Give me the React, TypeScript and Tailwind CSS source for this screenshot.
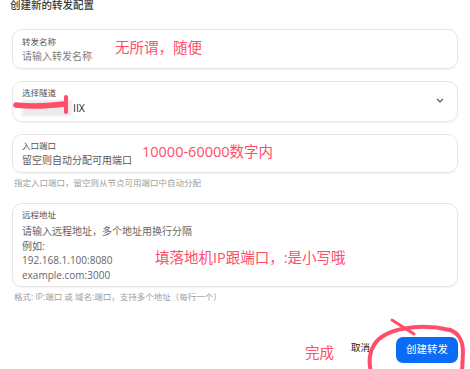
export default function App() {
  return (
    <div
      className="relative h-[369px] w-[470px] overflow-hidden bg-white px-3"
      style={{ fontFamily: '"Open Sans", "Noto Sans CJK SC", sans-serif' }}
    >
      {/* Header */}
      <h2 className="mt-[-2px] mb-[17px] ml-[-2px] text-[10.5px] leading-[14px] font-medium text-[#3a3a3a]">创建新的转发配置</h2>

      {/* 转发名称 */}
      <div className="rounded-[10px] border border-[#e6e6e6] px-[9px] pt-[6px] pb-[5px] shadow-[0_1px_2px_rgba(0,0,0,0.05)]">
        <div className="text-[8.5px] leading-[12px] text-[#555]">转发名称</div>
        <div className="mt-[1px] text-[10px] leading-[14px] text-[#808080]">请输入转发名称</div>
      </div>

      {/* 选择隧道 */}
      <div className="mt-[12px] flex items-center rounded-[10px] border border-[#e6e6e6] px-[9px] pt-[5px] pb-[5px] shadow-[0_1px_2px_rgba(0,0,0,0.05)]">
        <div className="flex-1">
          <div className="text-[8.5px] leading-[12px] text-[#555]">选择隧道</div>
          <div className="mt-[1px] flex items-center text-[10.5px] leading-[14px] text-[#222]">
            <span className="mr-[1px] inline-block h-[16px] w-[50px] bg-[#ebebeb] blur-[1px]" />
            IIX
          </div>
        </div>
        <svg width="8" height="5" viewBox="0 0 8 5" className="mr-[4px] mt-[-2px]">
          <path d="M1 1l3 3 3-3" fill="none" stroke="#555" strokeWidth="1.2" />
        </svg>
      </div>

      {/* 入口端口 */}
      <div className="mt-[12px] rounded-[10px] border border-[#e6e6e6] px-[9px] pt-[5px] pb-[5px] shadow-[0_1px_2px_rgba(0,0,0,0.05)]">
        <div className="text-[8.5px] leading-[12px] text-[#555]">入口端口</div>
        <div className="mt-[1px] text-[10px] leading-[14px] text-[#5a5a5a]">留空则自动分配可用端口</div>
      </div>
      <p className="mt-[4px] pl-[2px] text-[8.5px] leading-[12px] text-[#a0a0a0]">
        指定入口端口，留空则从节点可用端口中自动分配
      </p>

      {/* 远程地址 */}
      <div className="mt-[14px] rounded-[10px] border border-[#e6e6e6] px-[9px] pt-[5px] pb-[4px] shadow-[0_1px_2px_rgba(0,0,0,0.05)]">
        <div className="text-[8.5px] leading-[12px] text-[#555]">远程地址</div>
        <div className="mt-[3px] text-[10px] leading-[14.5px] text-[#666]">
          <div>请输入远程地址，多个地址用换行分隔</div>
          <div>例如:</div>
          <div>192.168.1.100:8080</div>
          <div>example.com:3000</div>
        </div>
      </div>
      <p className="mt-[4px] pl-[2px] text-[8.5px] leading-[12px] text-[#a0a0a0]">
        格式: IP:端口 或 域名:端口，支持多个地址（每行一个）
      </p>

      {/* Footer buttons */}
      <div className="mt-[34px] flex items-center justify-end">
        <button className="mr-[26px] mt-[-4px] text-[9.5px] leading-[14px] text-[#222]">取消</button>
        <button className="h-[26px] w-[62px] rounded-[7px] bg-[#0a6cf5] text-[10.5px] text-white">创建转发</button>
      </div>

      {/* Annotations */}
      <span className="absolute top-[38px] left-[115px] text-[14.5px] leading-[20px] text-[#ff4d6a]">无所谓，随便</span>
      <span className="absolute top-[142px] left-[142px] text-[14.5px] leading-[20px] text-[#ff4d6a]">10000-60000数字内</span>
      <span className="absolute top-[248px] left-[155px] text-[14.5px] leading-[20px] text-[#ff4d6a]">填落地机IP跟端口，:是小写哦</span>
      <span className="absolute top-[343px] left-[305px] text-[14.5px] leading-[20px] text-[#ff4d6a]">完成</span>

      <svg className="pointer-events-none absolute inset-0" width="470" height="369" viewBox="0 0 470 369">
        <g fill="none" stroke="#ff4d6a" strokeLinecap="round">
          <path d="M16 105 C32 107 48 106 64 104" strokeWidth="5.5" />
          <path d="M66 97 L66 112" strokeWidth="4" />
          <path d="M392 320 L414 334" strokeWidth="3" />
          <path d="M450 330 C420 323 384 328 374 345 C368 355 369 364 371 372" strokeWidth="4" />
          <path d="M450 330 C459 333 463 342 463 352 L462 372" strokeWidth="4" />
        </g>
      </svg>
    </div>
  )
}
